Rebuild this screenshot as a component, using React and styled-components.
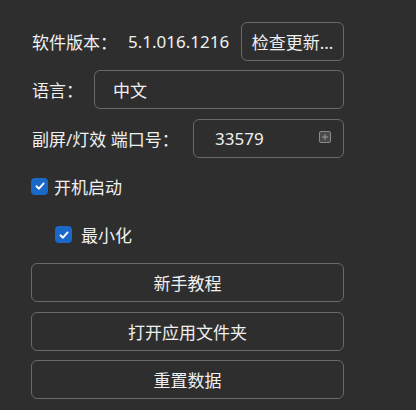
import * as React from "react";
import styled, { createGlobalStyle } from "styled-components";

const Global = createGlobalStyle`
  html, body {
    margin: 0;
    background: #2e2e2e;
  }
  body {
    font-family: "Noto Sans", "Noto Sans CJK SC", sans-serif;
    color: #f0f0f0;
  }
`;

const Panel = styled.div`
  width: 313px;
  padding: 22px 0 0 31px;
  display: flex;
  flex-direction: column;
  gap: 9.3px;
  font-size: 17px;
`;

const Row = styled.div`
  height: 39px;
  display: flex;
  align-items: center;
  padding-left: ${(p) => p.indent || 0}px;
`;

const Label = styled.span`
  width: ${(p) => p.width}px;
  flex-shrink: 0;
  padding-left: 1px;
  white-space: nowrap;
`;

const Value = styled.span`
  flex: 1;
  white-space: nowrap;
`;

const Box = styled.div`
  box-sizing: border-box;
  height: 39px;
  border: 1px solid #696969;
  border-radius: 6px;
  background: #2e2e2e;
  display: flex;
  align-items: center;
`;

const Field = styled(Box)`
  flex: 1;
  padding-left: ${(p) => p.pad}px;
  justify-content: space-between;
  padding-right: 12px;
`;

const Button = styled(Box)`
  justify-content: center;
  width: ${(p) => (p.small ? "103px" : "100%")};
  flex-shrink: 0;
`;

const Check = styled.span`
  width: 17px;
  height: 17px;
  border-radius: 4px;
  background: #1a68c8;
  display: inline-flex;
  align-items: center;
  justify-content: center;
  margin-right: ${(p) => p.gap}px;
`;

const Spin = styled.span`
  width: 10px;
  height: 10px;
  border: 1px solid #8a8a8a;
  border-radius: 2px;
  background: #4a4a4a;
  display: inline-flex;
  align-items: center;
  justify-content: center;
  margin-top: -2px;
`;

const Tick = () => (
  <svg width="12" height="12" viewBox="0 0 12 12">
    <path d="M2.5 6.3 L5 8.7 L9.6 3.4" fill="none" stroke="#fff" strokeWidth="1.9" strokeLinecap="round" strokeLinejoin="round" />
  </svg>
);

const Plus = () => (
  <svg width="8" height="8" viewBox="0 0 8 8">
    <path d="M4 1 V7 M1 4 H7" stroke="#9a9a9a" strokeWidth="1" />
  </svg>
);

const App = () => {
  return (
    <>
      <Global />
      <Panel>
        <Row>
          <Label width={96}>软件版本：</Label>
          <Value>5.1.016.1216</Value>
          <Button small>检查更新...</Button>
        </Row>
        <Row>
          <Label width={62}>语言：</Label>
          <Field pad={18}>中文</Field>
        </Row>
        <Row>
          <Label width={161}>副屏/灯效 端口号：</Label>
          <Field pad={21}>
            33579
            <Spin>
              <Plus />
            </Spin>
          </Field>
        </Row>
        <Row>
          <Check gap={6}>
            <Tick />
          </Check>
          开机启动
        </Row>
        <Row indent={24}>
          <Check gap={9}>
            <Tick />
          </Check>
          最小化
        </Row>
        <Button>新手教程</Button>
        <Button>打开应用文件夹</Button>
        <Button>重置数据</Button>
      </Panel>
    </>
  );
};

export default App;
